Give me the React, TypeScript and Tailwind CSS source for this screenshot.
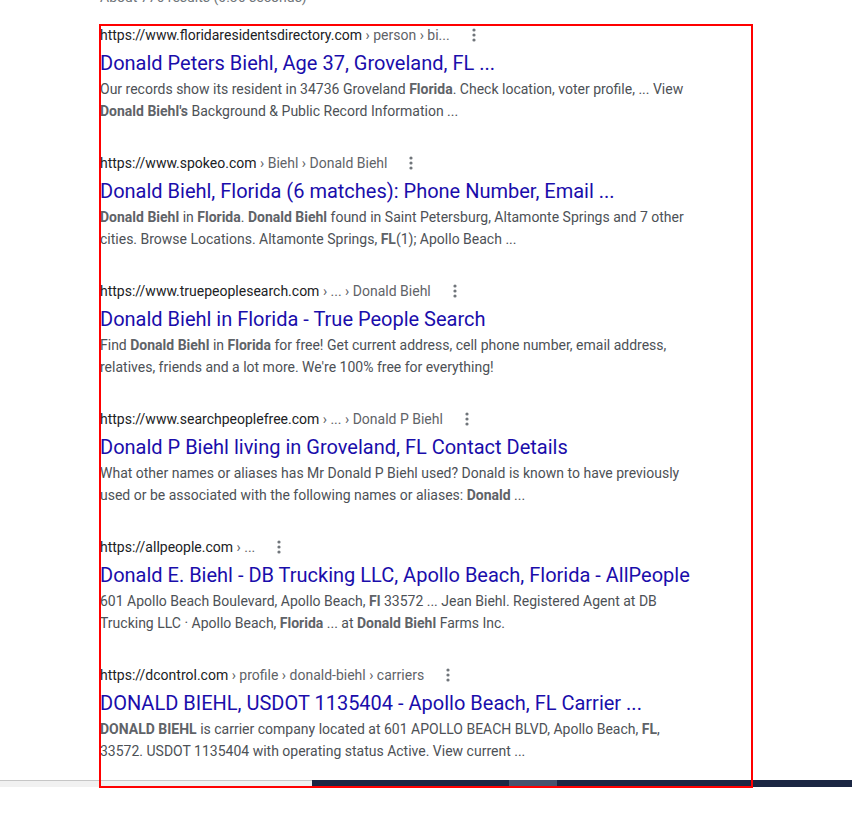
import React from "react";

type Part = string | { b: string };

type Result = {
  domain: string;
  crumbs: string;
  title: string;
  snippet: Part[];
};

const results: Result[] = [
  {
    domain: "https://www.floridaresidentsdirectory.com",
    crumbs: "› person › bi...",
    title: "Donald Peters Biehl, Age 37, Groveland, FL ...",
    snippet: [
      "Our records show its resident in 34736 Groveland ",
      { b: "Florida" },
      ". Check location, voter profile, ... View ",
      { b: "Donald Biehl's" },
      " Background & Public Record Information ...",
    ],
  },
  {
    domain: "https://www.spokeo.com",
    crumbs: "› Biehl › Donald Biehl",
    title: "Donald Biehl, Florida (6 matches): Phone Number, Email ...",
    snippet: [
      { b: "Donald Biehl" },
      " in ",
      { b: "Florida" },
      ". ",
      { b: "Donald Biehl" },
      " found in Saint Petersburg, Altamonte Springs and 7 other cities. Browse Locations. Altamonte Springs, ",
      { b: "FL" },
      "(1); Apollo Beach ...",
    ],
  },
  {
    domain: "https://www.truepeoplesearch.com",
    crumbs: "› ... › Donald Biehl",
    title: "Donald Biehl in Florida - True People Search",
    snippet: [
      "Find ",
      { b: "Donald Biehl" },
      " in ",
      { b: "Florida" },
      " for free! Get current address, cell phone number, email address, relatives, friends and a lot more. We're 100% free for everything!",
    ],
  },
  {
    domain: "https://www.searchpeoplefree.com",
    crumbs: "› ... › Donald P Biehl",
    title: "Donald P Biehl living in Groveland, FL Contact Details",
    snippet: [
      "What other names or aliases has Mr Donald P Biehl used? Donald is known to have previously used or be associated with the following names or aliases: ",
      { b: "Donald" },
      " ...",
    ],
  },
  {
    domain: "https://allpeople.com",
    crumbs: "› ...",
    title: "Donald E. Biehl - DB Trucking LLC, Apollo Beach, Florida - AllPeople",
    snippet: [
      "601 Apollo Beach Boulevard, Apollo Beach, ",
      { b: "Fl" },
      " 33572 ... Jean Biehl. Registered Agent at DB Trucking LLC · Apollo Beach, ",
      { b: "Florida" },
      " ... at ",
      { b: "Donald Biehl" },
      " Farms Inc.",
    ],
  },
  {
    domain: "https://dcontrol.com",
    crumbs: "› profile › donald-biehl › carriers",
    title: "DONALD BIEHL, USDOT 1135404 - Apollo Beach, FL Carrier ...",
    snippet: [
      { b: "DONALD BIEHL" },
      " is carrier company located at 601 APOLLO BEACH BLVD, Apollo Beach, ",
      { b: "FL" },
      ", 33572. USDOT 1135404 with operating status Active. View current ...",
    ],
  },
];

function MoreDots() {
  return (
    <svg width="16" height="16" viewBox="0 0 16 16" className="ml-4 shrink-0">
      <circle cx="8" cy="3" r="1.6" fill="#70757a" />
      <circle cx="8" cy="8" r="1.6" fill="#70757a" />
      <circle cx="8" cy="13" r="1.6" fill="#70757a" />
    </svg>
  );
}

function SearchResult({ r }: { r: Result }) {
  return (
    <div className="mb-[31px]">
      {/* url + menu */}
      <div className="flex items-center h-5 text-sm leading-5">
        <span className="text-[#202124]">
          {r.domain} <span className="text-[#5f6368]">{r.crumbs}</span>
        </span>
        <MoreDots />
      </div>
      <div className="mt-[5px] text-[20px] leading-[26px] text-[#1a0dab]">
        {r.title}
      </div>
      <div className="mt-[2px] max-w-[600px] text-sm leading-[22px] text-[#4d5156]">
        {r.snippet.map((p, i) =>
          typeof p === "string" ? (
            <span key={i}>{p}</span>
          ) : (
            <b key={i} className="font-bold text-[#5f6368]">
              {p.b}
            </b>
          )
        )}
      </div>
    </div>
  );
}

export default function App() {
  return (
    <div className="relative w-[852px] h-[813px] overflow-hidden bg-white font-['Roboto',sans-serif]">
      <div className="h-[780px] overflow-hidden pl-[100px]">
        <div className="-mt-[13px] h-5 text-sm leading-5 text-[#70757a]">
          About 776 results (0.36 seconds)
        </div>
        <div className="mt-[18px]">
          {results.map((r, i) => (
            <SearchResult key={i} r={r} />
          ))}
        </div>
      </div>

      {/* bottom strip */}
      <div className="flex h-[7px]">
        <div className="w-[312px] bg-[#f1f1f1] border-t border-[#c6c6c6]" />
        <div className="flex-1 flex bg-[#1b2643]">
          <div className="ml-[197px] w-[48px] bg-[#46536e]" />
        </div>
      </div>

      {/* red selection box */}
      <div className="absolute left-[99px] top-[24px] w-[654px] h-[764px] border-2 border-[#ff0000] pointer-events-none" />
    </div>
  );
}
